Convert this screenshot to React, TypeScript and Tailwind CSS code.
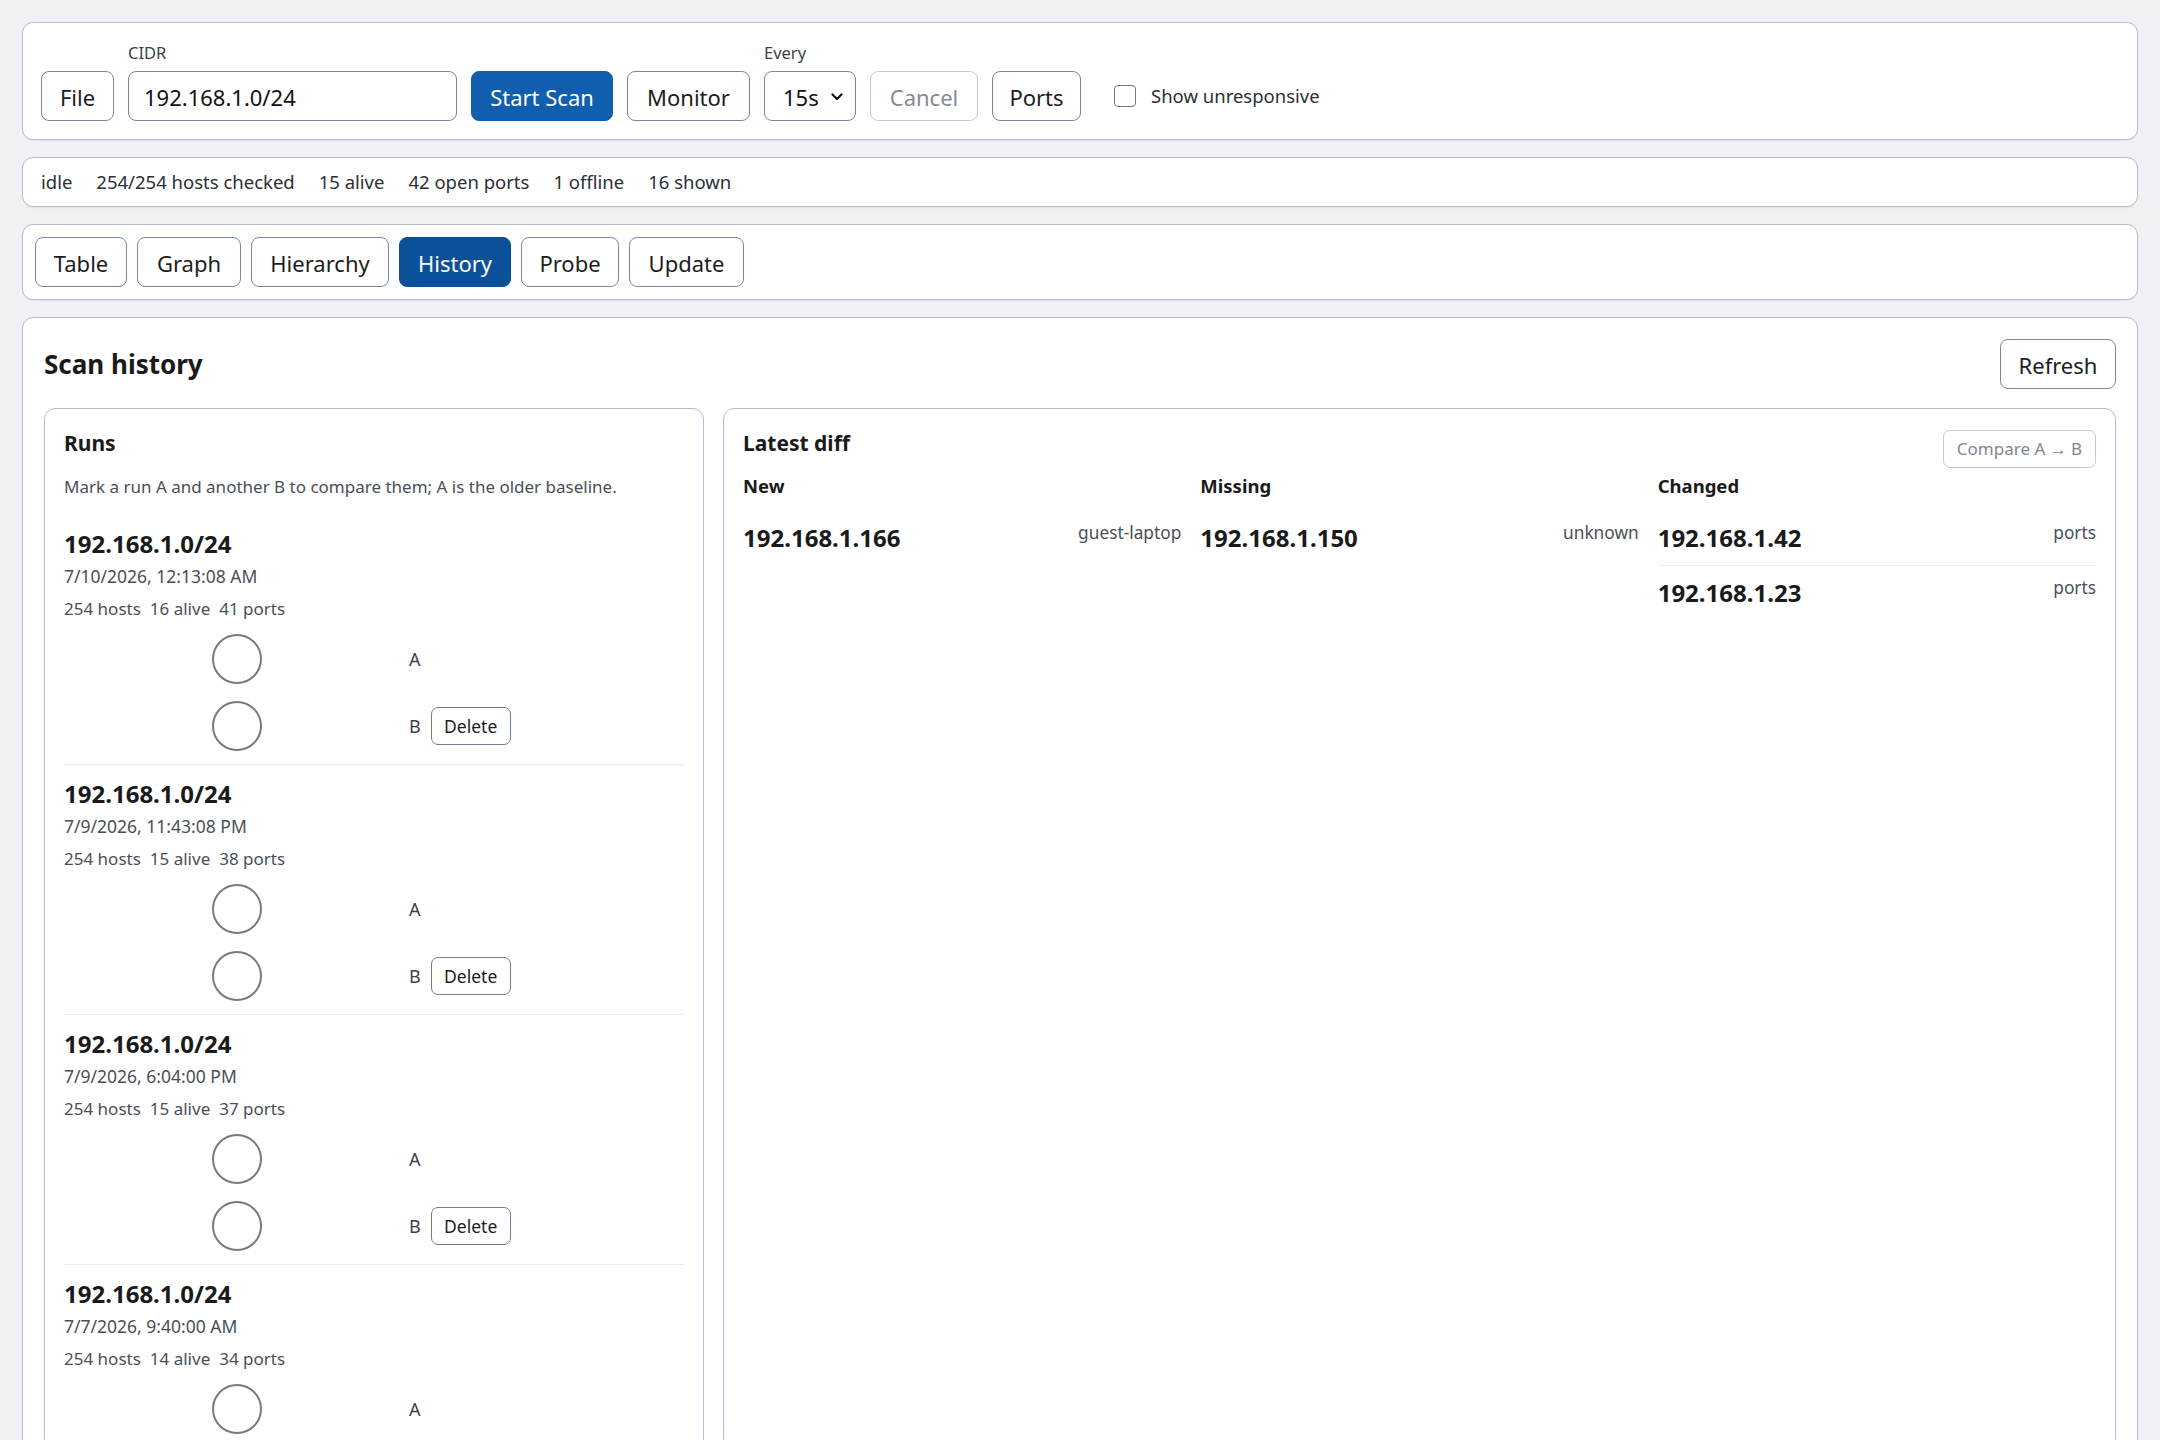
import React from 'react'

type Run = {
  cidr: string
  when: string
  hosts: number
  alive: number
  ports: number
}

const runs: Run[] = [
  { cidr: '192.168.1.0/24', when: '7/10/2026, 12:13:08 AM', hosts: 254, alive: 16, ports: 41 },
  { cidr: '192.168.1.0/24', when: '7/9/2026, 11:43:08 PM', hosts: 254, alive: 15, ports: 38 },
  { cidr: '192.168.1.0/24', when: '7/9/2026, 6:04:00 PM', hosts: 254, alive: 15, ports: 37 },
  { cidr: '192.168.1.0/24', when: '7/7/2026, 9:40:00 AM', hosts: 254, alive: 14, ports: 34 },
]

function Btn({
  children,
  className = '',
  variant = 'default',
}: {
  children: React.ReactNode
  className?: string
  variant?: 'default' | 'primary' | 'active' | 'disabled'
}) {
  const look = {
    default: 'border-[#7b899e] bg-white text-[#1c1c1c]',
    primary: 'border-[#0f5fae] bg-[#0f5fae] text-white',
    active: 'border-[#0b5199] bg-[#0b5199] text-white',
    disabled: 'border-[#c4cbd6] bg-white text-[#858c97]',
  }[variant]
  return (
    <button
      className={`flex h-[50px] items-center justify-center rounded-[8px] border pt-[2px] text-[22px] ${look} ${className}`}
    >
      {children}
    </button>
  )
}

function Radio() {
  return (
    <div className="flex w-[345px] justify-center">
      <div className="h-[50px] w-[50px] rounded-full border-2 border-[#7a7a7a] bg-white" />
    </div>
  )
}

function RunItem({ run, last }: { run: Run; last?: boolean }) {
  return (
    <div className="border-b border-[#ebedf0] pb-[13px] pt-[12px]">
      <div className="text-[24px] font-bold leading-[34px] text-[#1a1a1a]">{run.cidr}</div>
      <div className="mt-[2px] text-[17.5px] leading-[26px] text-[#4a4f57]">{run.when}</div>
      <div className="mt-[7px] flex gap-[9px] text-[17px] leading-[26px] text-[#4a4f57]">
        <span>{run.hosts} hosts</span>
        <span>{run.alive} alive</span>
        <span>{run.ports} ports</span>
      </div>
      <div className="mt-[12px] flex items-center">
        <Radio />
        <span className="text-[18px] text-[#3d424a]">A</span>
      </div>
      {!last && (
        <div className="mt-[17px] flex items-center">
          <Radio />
          <span className="text-[18px] text-[#3d424a]">B</span>
          <button className="ml-[10px] flex h-[38px] w-[80px] items-center justify-center rounded-[7px] border border-[#6f7d93] bg-white text-[17.5px] text-[#1c1c1c]">
            Delete
          </button>
        </div>
      )}
    </div>
  )
}

function DiffRow({ ip, note }: { ip: string; note: string }) {
  return (
    <div className="flex items-start justify-between py-[10px]">
      <span className="text-[24px] font-bold leading-[34px] text-[#1a1a1a]">{ip}</span>
      <span className="text-[17.3px] leading-[24px] text-[#4a4f57]">{note}</span>
    </div>
  )
}

export default function App() {
  return (
    <div className="flex h-[1440px] flex-col gap-[17px] overflow-hidden bg-[#eff1f5] p-[22px] font-['Noto_Sans',sans-serif] text-[#1a1a1a]">
      {/* Scan controls */}
      <div className="flex items-end gap-[14px] rounded-[11px] border border-[#b3bdcb] bg-white px-[18px] pb-[18px] pt-[19px] shadow-[0_1px_2px_rgba(0,0,0,0.06)]">
        <Btn className="w-[73px]">File</Btn>
        <div className="flex flex-col gap-[7px]">
          <span className="text-[16.5px] leading-[22px] text-[#3a3f47]">CIDR</span>
          <div className="flex h-[50px] w-[329px] items-center rounded-[8px] border border-[#7b899e] px-[15px] pt-[2px] text-[22px] text-[#111]">
            192.168.1.0/24
          </div>
        </div>
        <Btn variant="primary" className="w-[142px]">Start Scan</Btn>
        <Btn className="w-[123px]">Monitor</Btn>
        <div className="flex flex-col gap-[7px]">
          <span className="text-[16.5px] leading-[22px] text-[#3a3f47]">Every</span>
          <div className="flex h-[50px] w-[92px] items-center justify-between rounded-[8px] border border-[#7b899e] pl-[18px] pr-[12px] pt-[2px] text-[22px] text-[#111]">
            <span>15s</span>
            <svg width="12" height="8" viewBox="0 0 12 8" fill="none">
              <path d="M1.5 1.5 6 6l4.5-4.5" stroke="#111" strokeWidth="2.2" strokeLinecap="round" strokeLinejoin="round" />
            </svg>
          </div>
        </div>
        <Btn variant="disabled" className="w-[108px]">Cancel</Btn>
        <Btn className="w-[89px]">Ports</Btn>
        <label className="ml-[19px] flex h-[50px] items-center gap-[15px]">
          <span className="h-[22px] w-[22px] rounded-[4px] border-[1.5px] border-[#767676] bg-white" />
          <span className="text-[18.5px] text-[#2b2f36]">Show unresponsive</span>
        </label>
      </div>

      {/* Status */}
      <div className="flex gap-[24px] rounded-[11px] border border-[#b3bdcb] bg-white px-[18px] py-[11px] text-[18.5px] leading-[26px] text-[#2b2f36] shadow-[0_1px_2px_rgba(0,0,0,0.06)]">
        <span>idle</span>
        <span>254/254 hosts checked</span>
        <span>15 alive</span>
        <span>42 open ports</span>
        <span>1 offline</span>
        <span>16 shown</span>
      </div>

      {/* Tabs */}
      <div className="flex gap-[10px] rounded-[11px] border border-[#b3bdcb] bg-white p-[12px] shadow-[0_1px_2px_rgba(0,0,0,0.06)]">
        <Btn className="w-[92px]">Table</Btn>
        <Btn className="w-[104px]">Graph</Btn>
        <Btn className="w-[138px]">Hierarchy</Btn>
        <Btn variant="active" className="w-[112px]">History</Btn>
        <Btn className="w-[98px]">Probe</Btn>
        <Btn className="w-[115px]">Update</Btn>
      </div>

      {/* History */}
      <div className="shrink-0 rounded-[11px] border border-[#b3bdcb] bg-white p-[21px]">
        <div className="mb-[19px] flex items-center justify-between">
          <h2 className="text-[26px] font-bold text-[#1a1a1a]">Scan history</h2>
          <Btn className="w-[116px]">Refresh</Btn>
        </div>

        <div className="grid grid-cols-[660px_1fr] gap-[19px]">
          <div className="rounded-[11px] border border-[#b3bdcb] px-[19px] pt-[19px]">
            <h3 className="text-[21px] font-bold leading-[30px]">Runs</h3>
            <p className="mb-[16px] mt-[17px] text-[17px] leading-[24px] text-[#4a4f57]">
              Mark a run A and another B to compare them; A is the older baseline.
            </p>
            {runs.map((r, i) => (
              <RunItem key={i} run={r} last={i === runs.length - 1} />
            ))}
          </div>

          <div className="rounded-[11px] border border-[#b3bdcb] px-[19px] pt-[19px]">
            <div className="flex h-[40px] items-start justify-between">
              <h3 className="text-[21px] font-bold leading-[30px]">Latest diff</h3>
              <button className="mt-[2px] flex h-[38px] w-[153px] items-center justify-center rounded-[7px] border border-[#c4cbd6] bg-white text-[17px] text-[#7f8792]">
                Compare A → B
              </button>
            </div>
            <div className="mt-[4px] grid grid-cols-3 gap-[19px]">
              <div>
                <div className="mb-[12px] text-[18.5px] font-bold leading-[27px]">New</div>
                <DiffRow ip="192.168.1.166" note="guest-laptop" />
              </div>
              <div>
                <div className="mb-[12px] text-[18.5px] font-bold leading-[27px]">Missing</div>
                <DiffRow ip="192.168.1.150" note="unknown" />
              </div>
              <div>
                <div className="mb-[12px] text-[18.5px] font-bold leading-[27px]">Changed</div>
                <div className="divide-y divide-[#ebedf0]">
                  <DiffRow ip="192.168.1.42" note="ports" />
                  <DiffRow ip="192.168.1.23" note="ports" />
                </div>
              </div>
            </div>
          </div>
        </div>
      </div>
    </div>
  )
}
